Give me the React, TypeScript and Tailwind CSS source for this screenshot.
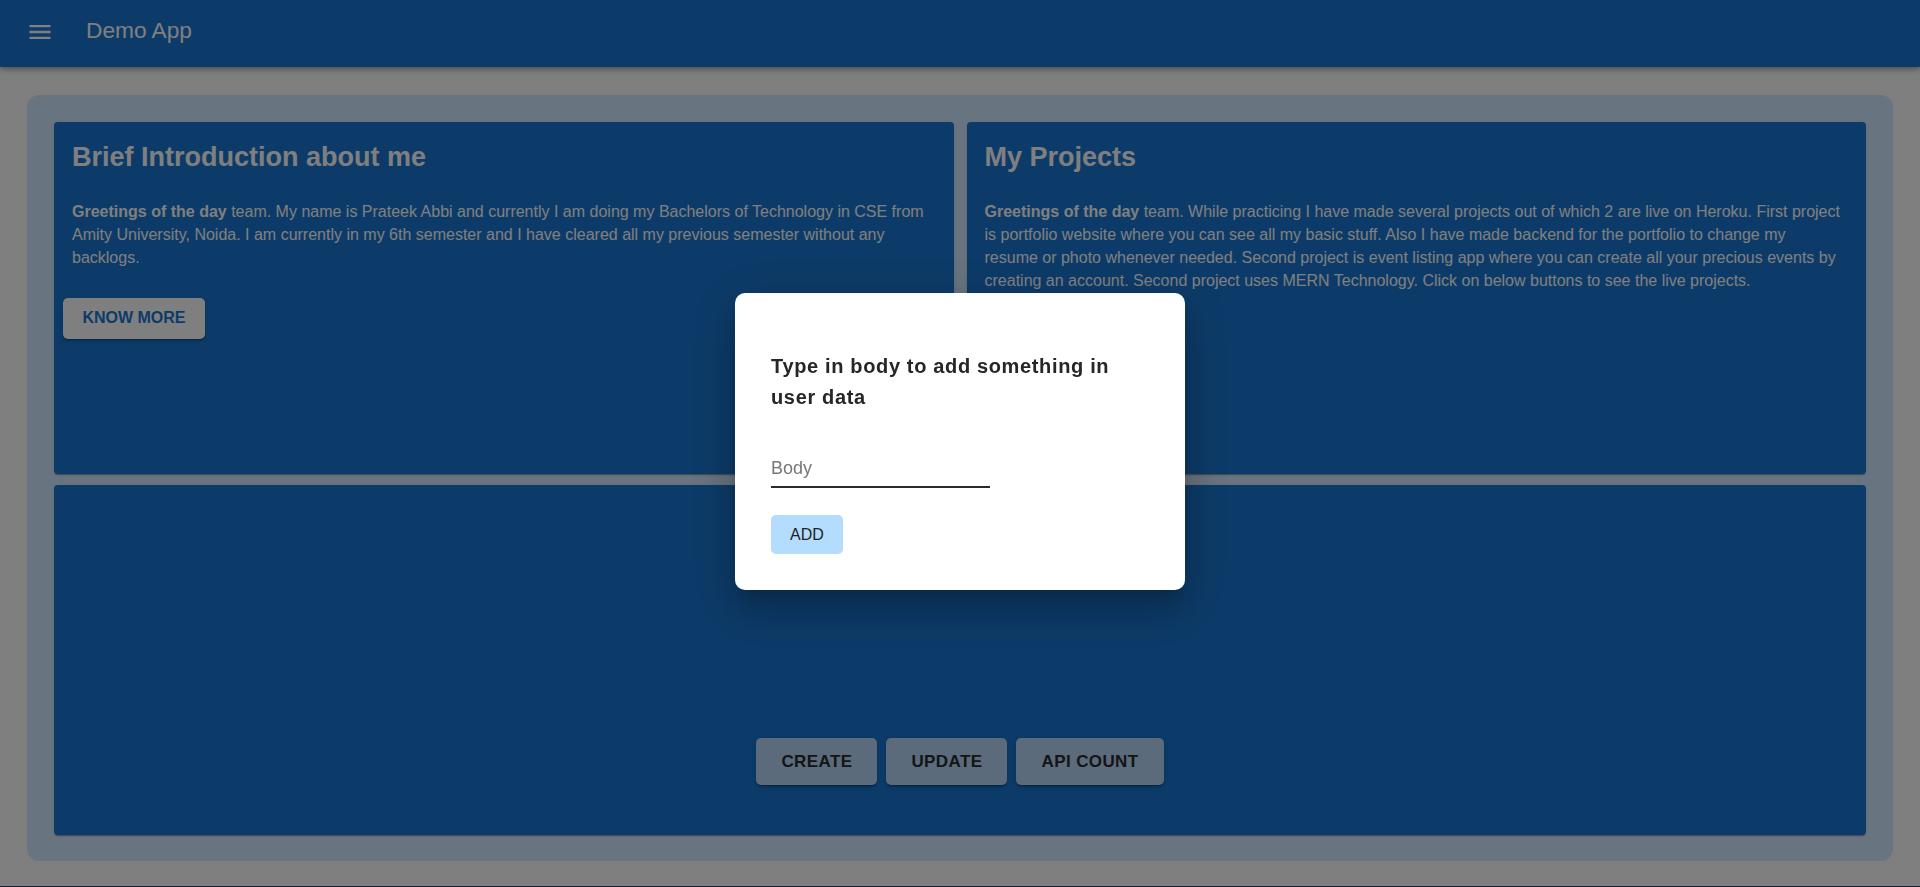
import React from "react";

const introText =
  " team. My name is Prateek Abbi and currently I am doing my Bachelors of Technology in CSE from Amity University, Noida. I am currently in my 6th semester and I have cleared all my previous semester without any backlogs.";

const projectsText =
  " team. While practicing I have made several projects out of which 2 are live on Heroku. First project is portfolio website where you can see all my basic stuff. Also I have made backend for the portfolio to change my resume or photo whenever needed. Second project is event listing app where you can create all your precious events by creating an account. Second project uses MERN Technology. Click on below buttons to see the live projects.";

const paperShadow =
  "shadow-[0_2px_1px_-1px_rgba(0,0,0,0.2),0_1px_1px_0_rgba(0,0,0,0.14),0_1px_3px_0_rgba(0,0,0,0.12)]";

const InfoCard = ({
  title,
  text,
  showButton,
}: {
  title: string;
  text: string;
  showButton?: boolean;
}) => {
  return (
    <div
      className={`h-[352px] rounded-[4px] bg-[#1976d2] pl-[18px] pr-[24px] pt-[20px] text-white ${paperShadow}`}
    >
      <h2 className="text-[27px] font-bold leading-[31px]">{title}</h2>
      <p className="mt-[28px] text-[16px] leading-[22.88px]">
        <b>Greetings of the day</b>
        {text}
      </p>
      {showButton && (
        <button className="-ml-[9px] mt-[28px] h-[41px] w-[142px] rounded-[5px] bg-white text-[16px] font-bold text-[#1976d2] shadow-[0_3px_1px_-2px_rgba(0,0,0,0.2),0_2px_2px_0_rgba(0,0,0,0.14),0_1px_5px_0_rgba(0,0,0,0.12)]">
          KNOW MORE
        </button>
      )}
    </div>
  );
};

const ActionButton = ({ label }: { label: string }) => (
  <button className="h-[47px] rounded-[5px] bg-[#b6d6f6] px-[25px] text-[17px] font-bold tracking-[0.4px] text-[#2a2a2a] shadow-[0_3px_1px_-2px_rgba(0,0,0,0.2),0_2px_2px_0_rgba(0,0,0,0.14),0_1px_5px_0_rgba(0,0,0,0.12)]">
    {label}
  </button>
);

const App = () => {
  return (
    <div className="relative min-h-[887px] bg-white font-['Liberation_Sans',Arial,sans-serif]">
      <header className="relative z-10 flex h-[67px] items-center bg-[#1976d2] pl-[26px] text-white shadow-[0_2px_4px_-1px_rgba(0,0,0,0.2),0_4px_5px_0_rgba(0,0,0,0.14),0_1px_10px_0_rgba(0,0,0,0.12)]">
        <svg
          viewBox="0 0 24 24"
          fill="currentColor"
          className="mb-[3px] h-[28px] w-[28px]"
        >
          <path d="M3 18h18v-2H3v2zm0-5h18v-2H3v2zm0-7v2h18V6H3z" />
        </svg>
        <span className="mb-[7px] ml-[32px] text-[22.7px]">Demo App</span>
      </header>

      <main className="px-[27px] pb-[25px] pt-[28px]">
        <div className="rounded-[12px] bg-[#d0e8ff] px-[27px] pb-[26px] pt-[27px]">
          <div className="grid grid-cols-2 gap-x-[13px] gap-y-[11px]">
            <InfoCard
              title="Brief Introduction about me"
              text={introText}
              showButton
            />
            <InfoCard title="My Projects" text={projectsText} />
            <div
              className={`col-span-2 flex h-[350px] items-end justify-center gap-[9px] rounded-[4px] bg-[#1976d2] pb-[50px] ${paperShadow}`}
            >
              <ActionButton label="CREATE" />
              <ActionButton label="UPDATE" />
              <ActionButton label="API COUNT" />
            </div>
          </div>
        </div>
      </main>
      <div className="h-px bg-[#2c3a58]" />

      {/* modal */}
      <div className="fixed inset-0 z-20 flex items-center justify-center bg-black/50">
        <div className="mb-[4px] h-[297px] w-[450px] rounded-[10px] bg-white px-[36px] pt-[58px] shadow-[0_11px_15px_-7px_rgba(0,0,0,0.2),0_24px_38px_3px_rgba(0,0,0,0.14),0_9px_46px_8px_rgba(0,0,0,0.12)]">
          <h2 className="text-[20px] font-bold leading-[31px] tracking-[0.65px] text-[#262626]">
            Type in body to add something in user data
          </h2>
          <div className="mt-[44px] w-[219px] border-b-2 border-[#2b2b2b] pb-[6px]">
            <input
              placeholder="Body"
              className="block w-full bg-transparent text-[18px] leading-[23px] text-[#222] outline-none placeholder:text-[#777]"
            />
          </div>
          <button className="mt-[27px] h-[39px] w-[72px] rounded-[5px] bg-[#b3dcff] text-[16px] text-[#222]">
            ADD
          </button>
        </div>
      </div>
    </div>
  );
};

export default App;
